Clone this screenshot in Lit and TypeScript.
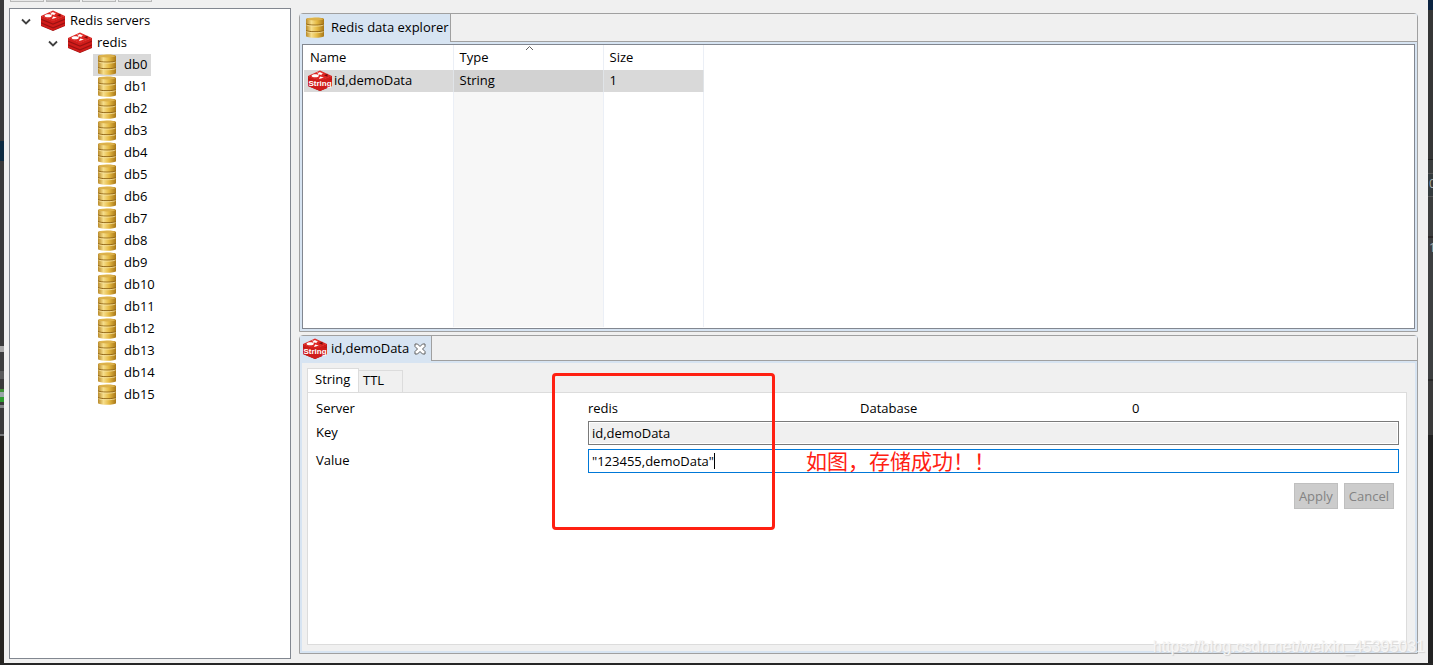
import { LitElement, html, css, svg } from "lit";
import { customElement, property, state } from "lit/decorators.js";
import { classMap } from "lit/directives/class-map.js";

@customElement("redis-icon")
class RedisIcon extends LitElement {
  @property() label = "";
  static styles = css`
    :host { display: block; flex: none; width: 24px; height: 22px; }
    svg { display: block; }
    .tag { font: bold 8px "Liberation Sans", sans-serif; fill: #fff; }
  `;
  render() {
    return html`<svg width="24" height="22" viewBox="0 0 24 22" aria-hidden="true">
      <path fill="#9a1212" d="M0 6v10l12 5 12-5V6L12 11z" />
      <path fill="#d01c1a" d="M0 13.5v2l12 5 12-5v-2l-12 5zM0 9.8v2.400l12 5 12-5V9.800l-12 5zM0 6v2.600l12 5 12-5V6l-12 5z" />
      <path fill="#dd2622" d="M0 6l12-5.500L24 6l-12 5.200z" />
      <path fill="#fff" d="M8.500 2.400l2.400.3 1.200-.9.7 1 2.600.3-1.900.9.4 1.300-2.200-.8-2.300.6 1-1.300zM3.600 5.700c0-2 7.200-2 7.200 0s-7.200 2-7.200 0zM10.800 9l1.400-2.600 3.700 1.100z" />
      <path fill="#7a0c0c" d="M16 5.300l3.500-1.500v3z" />
      ${this.label
        ? svg`<path fill="#cf1d1b" d="M0 9.500h24V16l-12 5-12-5z" /><text class="tag" x="12" y="16" text-anchor="middle">${this.label}</text>`
        : ""}
    </svg>`;
  }
}

@customElement("database-icon")
class DatabaseIcon extends LitElement {
  static styles = css`
    :host { display: block; flex: none; width: 20px; height: 22px; }
    svg { display: block; }
  `;
  render() {
    return html`<svg width="20" height="22" viewBox="0 0 20 22" aria-hidden="true">
      <defs>
        <linearGradient id="gold" x1="0" x2="1" y1="0" y2="0">
          <stop offset="0" stop-color="#b98a2a" />
          <stop offset=".3" stop-color="#f6de8c" />
          <stop offset=".6" stop-color="#e6bb45" />
          <stop offset="1" stop-color="#a87718" />
        </linearGradient>
      </defs>
      <path fill="url(#gold)" d="M1 2C1 -.1 19 -.1 19 2v17c0 2.400-18 2.400-18 0z" />
      <ellipse cx="10" cy="2.100" rx="8.500" ry="1.300" fill="#dcb14a" />
      <path fill="none" stroke="#94691a" d="M1 6.800c1 1.700 17 1.700 18 0M1 13.400c1 1.700 17 1.700 18 0" />
      <path fill="none" stroke="#f7e3a0" stroke-width=".8" d="M1.500 8c2 1.500 15 1.500 17 0M1.500 14.600c2 1.500 15 1.500 17 0" />
    </svg>`;
  }
}

@customElement("app-root")
class AppRoot extends LitElement {
  @state() private selected = "db0";
  private databases = Array.from({ length: 16 }, (_, i) => `db${i}`);

  static styles = css`
    :host {
      display: block;
      height: 100vh;
      font: 13px/22px "Open Sans", "Noto Sans CJK SC", sans-serif;
      color: #000;
    }
    * { box-sizing: border-box; }
    button, input { font: inherit; color: inherit; margin: 0; }
    .desktop {
      position: relative;
      display: flex;
      height: 100%;
      overflow: hidden;
      background: #262626;
      padding-bottom: 2px;
    }
    .edge { flex: none; overflow: hidden; font-size: 12px; line-height: 16px; color: #a9b0b0; }
    .edge.left {
      width: 4px;
      background: linear-gradient(#3a3a3b 0 141px, #0c2a42 141px 161px, #3a3a3b 161px 346px, #a8a8a8 346px 352px, #3d3e3f 352px 371px, #5a5b5c 371px 379px, #3a3a3b 379px 389px, #3f8f35 389px 392px, #9aa4a8 392px 397px, #2c9a2c 397px 402px, #3a3a3b 402px 405px, #818385 405px 408px, #3a3a3b 408px 434px, #77797b 434px 436px, #262421 436px);
    }
    .edge.right {
      width: 5px;
      padding: 176px 0 0 1px;
      background: linear-gradient(#0b2340 0 10px, #353636 10px 159px, #222 159px 160px, #3b3e3e 160px 173px, #555 173px 174px, #343b3d 174px 196px, #555 196px 197px, #3b3d3d 197px 236px, #2b2828 236px 238px, #3d3f40 238px 379px, #292929 379px 381px, #3a3a3a 381px 435px, #222 435px);
    }
    .glyph { display: block; margin-bottom: 48px; }
    .window {
      flex: 1;
      min-width: 0;
      display: flex;
      flex-direction: column;
      background: #f0f0f0;
      padding: 0 10px 4px 5px;
    }
    .toolbar { display: flex; gap: 2px; height: 2px; margin-bottom: 6px; padding-left: 1px; flex: none; }
    .tool { width: 34px; height: 2px; padding: 0; border: 1px solid #b9b9b9; border-top: 0; background: #e8e8e8; }
    .tool.pressed { background: #c8c8c8; }
    .work { flex: 1; min-height: 0; display: flex; gap: 8px; }
    .tree {
      flex: none;
      width: 282px;
      background: #fff;
      border: 1px solid #828790;
      padding: 1px 0 0 10px;
      line-height: 20px;
    }
    .node { display: flex; align-items: flex-start; height: 22px; gap: 5px; }
    .node.child { padding-left: 27px; }
    .twisty { width: 12px; height: 12px; margin: 5px 4px 0 0; flex: none; }
    .leaves { padding-left: 73px; display: flex; flex-direction: column; align-items: flex-start; }
    .leaf {
      display: flex;
      align-items: flex-start;
      gap: 7px;
      height: 22px;
      padding: 0 4px;
      border: 0;
      background: none;
    }
    .leaf.selected { background: #d9d9d9; }
    .editors { flex: 1; min-width: 0; display: flex; flex-direction: column; gap: 3px; padding: 5px 0; }
    .pane {
      flex: 1;
      min-height: 0;
      display: flex;
      flex-direction: column;
      border: 1px solid #a0a0a0;
      border-radius: 4px 4px 0 0;
      background: #d7e4f2;
    }
    .strip { display: flex; height: 28px; flex: none; background: #d7e4f2; }
    .strip.low { height: 25px; }
    .tab { display: flex; align-items: center; gap: 4px; padding: 0 1px 0 3px; border-radius: 4px 0 0 0; white-space: nowrap; line-height: 20px; }
    .tab span { padding-bottom: 2px; }
    .tab database-icon { margin: 0 2px; }
    .rest { flex: 1; background: #f0f0f0; border: solid #a0a0a0; border-width: 0 0 1px 1px; border-radius: 0 3px 0 0; }
    .close { width: 12px; height: 22px; padding: 0; border: 0; background: none; margin: 0 4px 0 1px; display: flex; align-items: center; }
    .list { flex: 1; min-height: 0; margin: 2px; background: #fff; border: 1px solid #828790; padding: 0 1px 1px; }
    table { border-collapse: collapse; height: 100%; width: 399px; table-layout: fixed; }
    th, td { padding: 0 6px; text-align: left; font-weight: normal; border-right: 1px solid #ebeff6; }
    th { height: 25px; position: relative; padding-bottom: 1px; }
    td { height: 22px; }
    td.first { padding-left: 4px; }
    .c1 { width: 149px; }
    .c2 { width: 150px; }
    .c3 { width: 100px; }
    .entry { display: flex; align-items: center; gap: 2px; }
    .hit { line-height: 20px; }
    .hit td { background: #d9d9d9; border-color: #e0e4e8; vertical-align: top; }
    .entry { align-items: flex-start; }
    .hit td.sorted { background: #d2d2d2; }
    .sorted { background: #f7f7f7; }
    .filler td { height: auto; }
    .arrow { position: absolute; left: 71px; top: 0; }
    .sheet { flex: 1; min-height: 0; margin: 2px; padding: 5px 8px 6px 5px; background: #f0f0f0; display: flex; flex-direction: column; }
    .subtabs { display: flex; align-items: flex-end; height: 24px; flex: none; }
    .subtab { height: 22px; width: 44px; padding: 0 4px 2px; text-align: left; border: 1px solid #dcdcdc; border-width: 1px 1px 0 0; background: #f0f0f0; line-height: 19px; }
    .subtab.on { height: 25px; width: 52px; margin-bottom: -1px; padding: 0 7px 3px; border-left-width: 1px; background: #fff; position: relative; }
    .form {
      position: relative;
      flex: 1;
      background: #fff;
      border: 1px solid #dcdcdc;
      padding: 4px 7px 4px 8px;
      display: grid;
      grid-template-columns: repeat(4, minmax(0, 1fr));
      grid-template-rows: 24px 24px 28px 36px;
      column-gap: 5px;
      align-items: end;
      line-height: 22px;
    }
    .text { padding-bottom: 2px; }
    .span { grid-column: span 3; }
    .field { display: block; width: 100%; height: 24px; padding: 0 3px 1px; border: 1px solid #7a7a7a; background: #fff; border-radius: 0; outline: 0; }
    .field[readonly] { background: #f0f0f0; box-shadow: inset 0 0 0 1px #fff; }
    .field.active { border-color: #0078d7; }
    .cell { position: relative; }
    .caret { position: absolute; left: 126px; top: 4px; width: 1px; height: 16px; background: #000; }
    .actions { grid-column: 1 / -1; display: flex; justify-content: flex-end; gap: 6px; padding-right: 5px; }
    .actions button { height: 26px; padding: 0 4px 1px; border: 1px solid #bfbfbf; background: #ccc; color: #838383; }
    .mark { position: absolute; left: 244px; top: -20px; width: 223px; height: 157px; border: 3px solid #ff2012; border-radius: 4px; pointer-events: none; }
    .note { position: absolute; left: 498px; top: 53px; font: 21px/28px "Noto Sans CJK SC", sans-serif; color: #ff2012; white-space: nowrap; pointer-events: none; }
    .watermark { position: absolute; right: 8px; bottom: 8px; font: 16px/20px "Liberation Sans", sans-serif; color: #f6f6f6; text-shadow: 1px 1px 1px #d4d4d4; white-space: nowrap; }
  `;

  private twisty() {
    return html`<svg class="twisty" viewBox="0 0 12 12" aria-hidden="true"><path d="M2 4.500l4 4 4-4" fill="none" stroke="#404040" stroke-width="1.800" /></svg>`;
  }

  render() {
    return html`
      <div class="desktop">
        <div class="edge left"></div>
        <div class="window">
          <div class="toolbar">
            ${[0, 1, 2, 3].map((i) => html`<button class=${classMap({ tool: true, pressed: i === 1 })}></button>`)}
          </div>
          <div class="work">
            <nav class="tree">
              <div class="node">${this.twisty()}<redis-icon></redis-icon><span>Redis servers</span></div>
              <div class="node child">${this.twisty()}<redis-icon></redis-icon><span>redis</span></div>
              <div class="leaves">
                ${this.databases.map(
                  (db) => html`<button
                    class=${classMap({ leaf: true, selected: db === this.selected })}
                    @click=${() => (this.selected = db)}
                  ><database-icon></database-icon>${db}</button>`
                )}
              </div>
            </nav>
            <main class="editors">
              <section class="pane">
                <div class="strip">
                  <div class="tab"><database-icon></database-icon><span>Redis data explorer</span></div>
                  <div class="rest"></div>
                </div>
                <div class="list">
                  <table>
                    <colgroup><col class="c1" /><col class="c2" /><col class="c3" /></colgroup>
                    <thead>
                      <tr>
                        <th>Name</th>
                        <th>Type<svg class="arrow" width="9" height="6" viewBox="0 0 9 6"><path d="M1 5l3.500-3.500L8 5" fill="none" stroke="#606060" /></svg></th>
                        <th>Size</th>
                      </tr>
                    </thead>
                    <tbody>
                      <tr class="hit">
                        <td class="first"><div class="entry"><redis-icon label="String"></redis-icon>id,demoData</div></td>
                        <td class="sorted">String</td>
                        <td>1</td>
                      </tr>
                      <tr class="filler"><td></td><td class="sorted"></td><td></td></tr>
                    </tbody>
                  </table>
                </div>
              </section>
              <section class="pane">
                <div class="strip low">
                  <div class="tab">
                    <redis-icon label="String"></redis-icon><span>id,demoData</span>
                    <button class="close" aria-label="Close">
                      <svg width="12" height="12" viewBox="0 0 12 12"><path d="M1 1h2.500L6 3.500 8.500 1H11v2.500L8.500 6 11 8.500V11H8.500L6 8.500 3.500 11H1V8.500L3.500 6 1 3.500z" fill="#fff" stroke="#606060" /></svg>
                    </button>
                  </div>
                  <div class="rest"></div>
                </div>
                <div class="sheet">
                  <div class="subtabs">
                    <button class="subtab on">String</button>
                    <button class="subtab">TTL</button>
                  </div>
                  <form class="form" @submit=${(e: Event) => e.preventDefault()}>
                    <span class="text">Server</span><span class="text">redis</span><span class="text">Database</span><span class="text">0</span>
                    <label class="text" for="key">Key</label>
                    <div class="cell span"><input id="key" class="field" readonly value="id,demoData" /></div>
                    <label class="text" for="value">Value</label>
                    <div class="cell span"><input id="value" class="field active" value='"123455,demoData"' /><span class="caret"></span></div>
                    <div class="actions"><button disabled>Apply</button><button disabled>Cancel</button></div>
                    <div class="mark"></div>
                    <div class="note">如图，存储成功！！</div>
                  </form>
                </div>
              </section>
            </main>
          </div>
        </div>
        <div class="edge right"><span class="glyph">0</span><span class="glyph">1</span></div>
        <div class="watermark">https://blog.csdn.net/weixin_45395031</div>
      </div>
    `;
  }
}
